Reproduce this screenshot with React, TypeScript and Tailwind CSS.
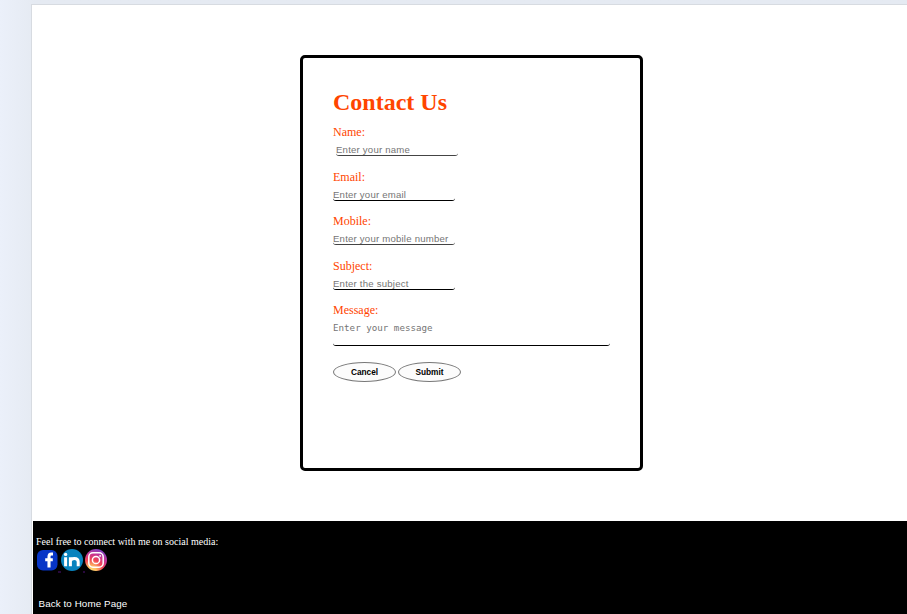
import type { ReactNode } from "react";

const serif = "font-['Liberation_Serif',serif]";
const sans = "font-['Liberation_Sans',sans-serif]";

function Field({ label, placeholder, inset = false, soft = false }: { label: string; placeholder: string; inset?: boolean; soft?: boolean }) {
  return (
    <div className="h-[44.5px]">
      <label className={`${serif} block h-[18px] text-[12px] leading-[18px] text-[#ff4500]`}>{label}</label>
      <input
        placeholder={placeholder}
        className={`${sans} block h-[15px] w-[122px] rounded-[3px] border-b bg-transparent p-0 pt-[3px] text-[9.6px] leading-[12px] tracking-[0.21px] outline-none placeholder:text-[#757575] ${soft ? "border-[#444]" : "border-black"} ${inset ? "ml-[3px]" : ""}`}
      />
    </div>
  );
}

function OvalButton({ children }: { children: ReactNode }) {
  return (
    <button type="button" className={`${sans} h-[20px] w-[63px] rounded-[50%] border border-[#777] bg-[#fcfcfc] text-[8.3px] font-bold leading-[18px] text-black`}>
      {children}
    </button>
  );
}

function FacebookLogo() {
  return (
    <svg width="21" height="21" viewBox="0 0 21 21" className="block">
      <rect width="20.5" height="20.5" rx="6" fill="#0735c7" />
      <path d="M16 4h-1.6q-2.4 0-2.4 2.8V17.5M8.2 9.7h7.6" fill="none" stroke="#fff" strokeWidth="3.1" />
    </svg>
  );
}

function LinkedInLogo() {
  return (
    <svg width="22" height="22" viewBox="0 0 22 22" className="block">
      <circle cx="11" cy="11" r="11" fill="#0883be" />
      <circle cx="4.6" cy="5.4" r="1.7" fill="#fff" />
      <path d="M4.6 8.2V17.2M9.4 8.2V17.2M9.4 12.6q0-3 3.9-3t3.9 3.2V17.2" fill="none" stroke="#fff" strokeWidth="3" />
    </svg>
  );
}

function InstagramLogo() {
  return (
    <svg width="22" height="22" viewBox="0 0 22 22" className="block">
      <defs>
        <radialGradient id="insta" cx="0.28" cy="1.02" r="1.08">
          <stop offset="0" stopColor="#ffe078" />
          <stop offset="0.22" stopColor="#ffc064" />
          <stop offset="0.5" stopColor="#f04454" />
          <stop offset="0.72" stopColor="#cb348f" />
          <stop offset="1" stopColor="#7a42c4" />
        </radialGradient>
      </defs>
      <circle cx="11" cy="11" r="11" fill="url(#insta)" />
      <rect x="3.8" y="3.8" width="14.4" height="14.4" rx="4.2" fill="none" stroke="#fff" strokeWidth="1.5" />
      <circle cx="11" cy="11" r="3.6" fill="none" stroke="#fff" strokeWidth="1.5" />
      <circle cx="15.1" cy="6.9" r="0.9" fill="#fff" />
    </svg>
  );
}

export default function App() {
  return (
    <div className="h-[614px] w-[907px] overflow-hidden bg-linear-to-r from-[#ebf0fa] from-0% to-[#e5eaf2] to-4% pl-[31px] pt-[4px]">
      <div className="flex h-[610px] flex-col border-l border-t border-[#d7dbe1] bg-white">
        <main className="h-[516px] pl-[268px] pt-[50px]">
          <form className="h-[416px] w-[343px] rounded-[5px] border-[3px] border-black pl-[30px] pt-[30px]">
            <h1 className={`${serif} h-[35px] text-[24px] font-bold leading-[28px] text-[#ff4500]`}>Contact Us</h1>
            <Field label="Name:" placeholder="Enter your name" inset soft />
            <Field label="Email:" placeholder="Enter your email" />
            <Field label="Mobile:" placeholder="Enter your mobile number" soft />
            <Field label="Subject:" placeholder="Enter the subject" />
            <label className={`${serif} block h-[18px] text-[12px] leading-[18px] text-[#ff4500]`}>Message:</label>
            <textarea
              placeholder="Enter your message"
              className="block h-[27px] w-[277px] resize-none overflow-hidden rounded-[3px] border-b border-black bg-transparent p-0 pt-[3px] font-['DejaVu_Sans_Mono',monospace] text-[9.2px] leading-[12px] outline-none placeholder:text-[#757575]"
            />
            <div className="mt-[16px] flex gap-[2px]">
              <OvalButton>Cancel</OvalButton>
              <OvalButton>Submit</OvalButton>
            </div>
          </form>
        </main>
        <footer className="ml-px h-[93px] bg-black pl-[3px] pt-[14px] text-white">
          <p className={`${serif} h-[14px] text-[10px] leading-[13px]`}>Feel free to connect with me on social media:</p>
          <div className="flex h-[24px] pl-[1px]">
            <a className="mt-px block w-[21px]"><FacebookLogo /></a>
            <span className="mt-[22px] h-[2px] w-[3px] bg-[#28083d]" />
            <a className="block w-[22px]"><LinkedInLogo /></a>
            <span className="mt-[22px] h-[2px] w-[2px] bg-[#28083d]" />
            <a className="block w-[22px]"><InstagramLogo /></a>
          </div>
          <a className={`${sans} ml-[2.5px] mt-[25px] block text-[9.8px] leading-[12px] tracking-[0.1px]`}>Back to Home Page</a>
        </footer>
      </div>
    </div>
  );
}
